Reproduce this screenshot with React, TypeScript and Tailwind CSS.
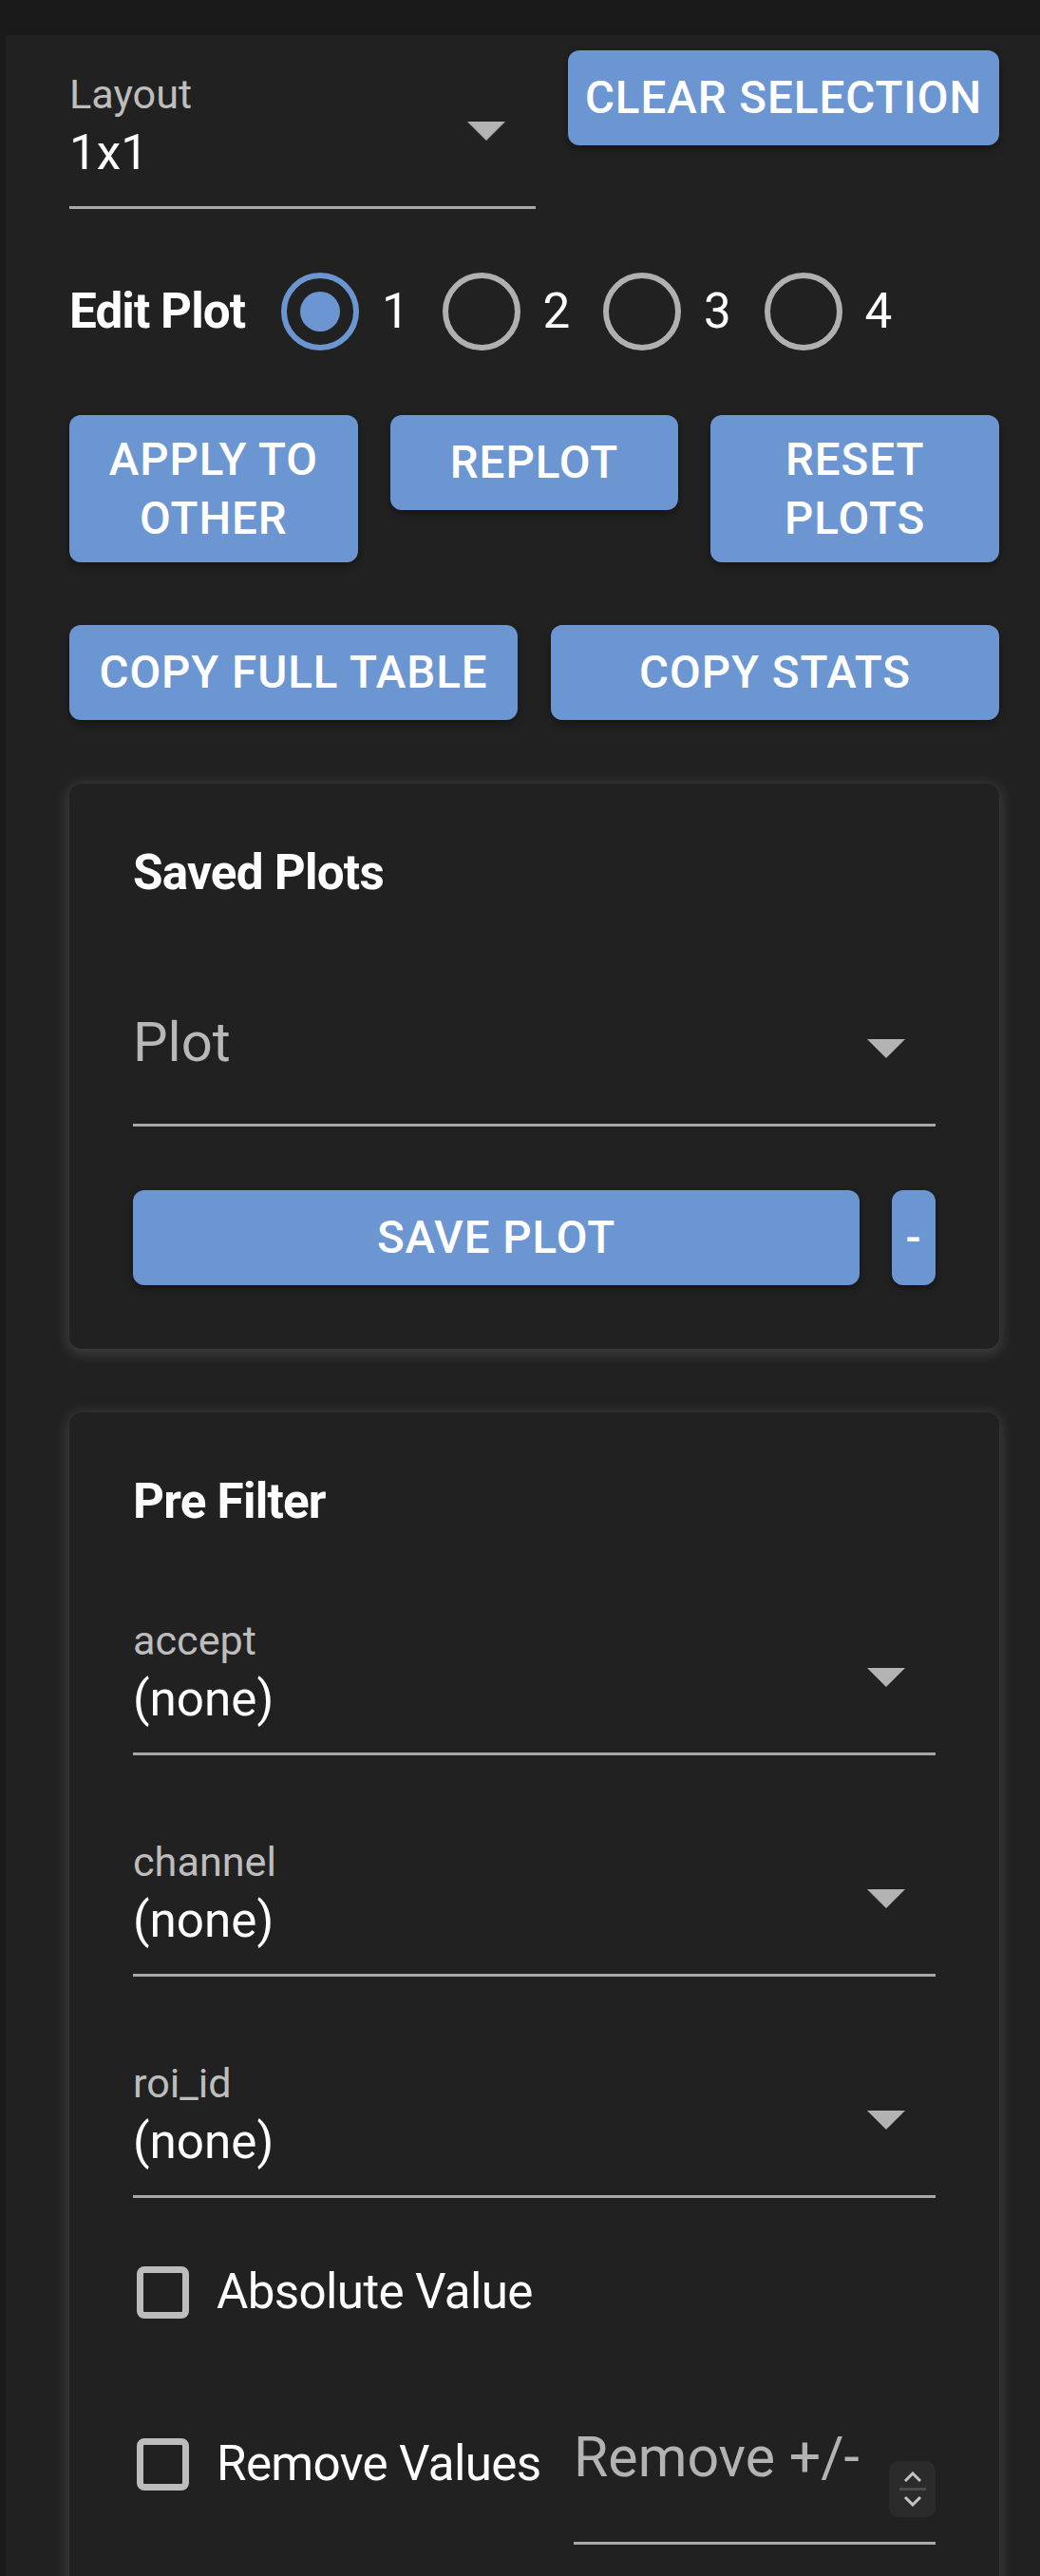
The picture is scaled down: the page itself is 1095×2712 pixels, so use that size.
import React from "react";

function Arrow({ className }: { className: string }) {
  return (
    <svg className={className} width="40" height="20" viewBox="0 0 40 20">
      <polygon points="0,0 40,0 20,20" fill="#b3b3b3" />
    </svg>
  );
}

function Field({ label, value, placeholder }: { label?: string; value?: string; placeholder?: string }) {
  return (
    <div className="relative w-full">
      <div className="h-[50px] text-[43.2px] leading-[50px] text-[#bdbdbd]">{label}</div>
      <div className="mt-[6px] h-[60px] text-[51.2px] leading-[60px] text-white">{value}</div>
      <div className="mt-[26px] h-[3px] bg-[#a9a9a9]" />
      {placeholder ? (
        <div className="absolute left-0 top-[23px] text-[58px] leading-[66px] text-[#b8b8b8]">{placeholder}</div>
      ) : null}
      <Arrow className="absolute right-[32px] top-[53px]" />
    </div>
  );
}

function Btn({ children, className }: { children: React.ReactNode; className: string }) {
  return (
    <button
      type="button"
      className={
        "flex items-center justify-center rounded-[12px] bg-[#6c96d2] text-white font-medium uppercase text-[47.5px] leading-[62px] tracking-[0.02em] text-center shadow-[0_4px_8px_rgba(0,0,0,0.35)] " +
        className
      }
    >
      {children}
    </button>
  );
}

function Radio({ checked, label }: { checked: boolean; label: string }) {
  return (
    <div className="flex w-[169.5px] shrink-0 items-center">
      {checked ? (
        <div className="flex h-[82px] w-[82px] items-center justify-center rounded-full border-[6px] border-[#6c96d2]">
          <div className="h-[42px] w-[42px] rounded-full bg-[#6c96d2]" />
        </div>
      ) : (
        <div className="h-[82px] w-[82px] rounded-full border-[6px] border-[#b0b0b0]" />
      )}
      <span className="ml-[24px] text-[51.2px] leading-[60px] text-white">{label}</span>
    </div>
  );
}

function Checkbox() {
  return <div className="ml-[4px] h-[55px] w-[55px] shrink-0 rounded-[8px] border-[7px] border-[#bdbdbd]" />;
}

function Card({ children }: { children: React.ReactNode }) {
  return (
    <div className="rounded-[13px] bg-[#212121] px-[67px] pt-[64px] pb-[67px] shadow-[0_3px_14px_3px_rgba(255,255,255,0.13)]">
      {children}
    </div>
  );
}

export default function App() {
  return (
    <div className="min-h-[2712px] w-[1095px] bg-[#1a1a1a] font-[Roboto,sans-serif] text-white">
      <div className="h-[37px] bg-[#1a1a1a]" />
      <div className="flex">
        <div className="w-[6px] shrink-0 bg-[#1a1a1a]" />
        <div className="flex-1 bg-[#212121] pl-[67px] pr-[43px] pt-[16px]">
          {/* Row 1 */}
          <div className="flex items-start justify-between">
            <div className="mt-[22px] w-[491px]">
              <Field label="Layout" value="1x1" />
            </div>
            <Btn className="h-[100px] w-[454px]">Clear Selection</Btn>
          </div>

          {/* Edit plot */}
          <div className="mt-[67px] flex h-[82px] items-center">
            <div className="w-[223px] shrink-0 text-[51.2px] font-bold leading-[60px] tracking-[-0.018em]">Edit Plot</div>
            <Radio checked label="1" />
            <Radio checked={false} label="2" />
            <Radio checked={false} label="3" />
            <Radio checked={false} label="4" />
          </div>

          {/* Buttons row 1 */}
          <div className="mt-[68px] grid grid-cols-3 items-start gap-x-[34px]">
            <Btn className="h-[155px]">
              Apply to
              <br />
              other
            </Btn>
            <Btn className="h-[100px]">Replot</Btn>
            <Btn className="h-[155px]">
              Reset
              <br />
              plots
            </Btn>
          </div>

          {/* Buttons row 2 */}
          <div className="mt-[66px] grid grid-cols-2 gap-x-[35px]">
            <Btn className="h-[100px]">Copy Full Table</Btn>
            <Btn className="h-[100px]">Copy Stats</Btn>
          </div>

          {/* Saved plots */}
          <div className="mt-[67px]">
            <Card>
              <div className="h-[60px] text-[51.2px] font-bold leading-[60px] tracking-[-0.015em]">Saved Plots</div>
              <div className="mt-[92px]">
                <Field placeholder="Plot" />
              </div>
              <div className="mt-[67px] flex gap-x-[34px]">
                <Btn className="h-[100px] flex-1">Save Plot</Btn>
                <Btn className="h-[100px] w-[46px]">-</Btn>
              </div>
            </Card>
          </div>

          {/* Pre filter */}
          <div className="mt-[67px]">
            <Card>
              <div className="h-[60px] text-[51.2px] font-bold leading-[60px] tracking-[-0.015em]">Pre Filter</div>
              <div className="mt-[92px] flex flex-col gap-y-[88px]">
                <Field label="accept" value="(none)" />
                <Field label="channel" value="(none)" />
                <Field label="roi_id" value="(none)" />
              </div>
              <div className="mt-[58px] flex h-[82px] items-center">
                <Checkbox />
                <span className="ml-[29px] text-[51.2px] leading-[60px] tracking-[-0.013em]">Absolute Value</span>
              </div>
              <div className="mt-[99px] flex items-start">
                <div className="flex h-[82px] items-center">
                  <Checkbox />
                  <span className="ml-[29px] text-[51.2px] leading-[60px] tracking-[-0.013em]">Remove Values</span>
                </div>
                <div className="ml-auto mt-[1px] w-[381px]">
                  <div className="flex items-start">
                    <div className="flex-1 text-[59px] leading-[66px] text-[#b3b3b3]">Remove +/-</div>
                    <div className="mt-[37px] flex h-[59px] w-[49px] flex-col items-center justify-center rounded-[10px] bg-[#2b2b2b]">
                      <svg width="20" height="12" viewBox="0 0 20 12">
                        <polyline points="2,10 10,2 18,10" fill="none" stroke="#c4c4c4" strokeWidth="3" />
                      </svg>
                      <div className="my-[5px] h-[3px] w-[28px] bg-[#4a4a4a]" />
                      <svg width="20" height="12" viewBox="0 0 20 12">
                        <polyline points="2,2 10,10 18,2" fill="none" stroke="#c4c4c4" strokeWidth="3" />
                      </svg>
                    </div>
                  </div>
                  <div className="mt-[26px] h-[3px] bg-[#a9a9a9]" />
                </div>
              </div>
            </Card>
          </div>
        </div>
      </div>
    </div>
  );
}
